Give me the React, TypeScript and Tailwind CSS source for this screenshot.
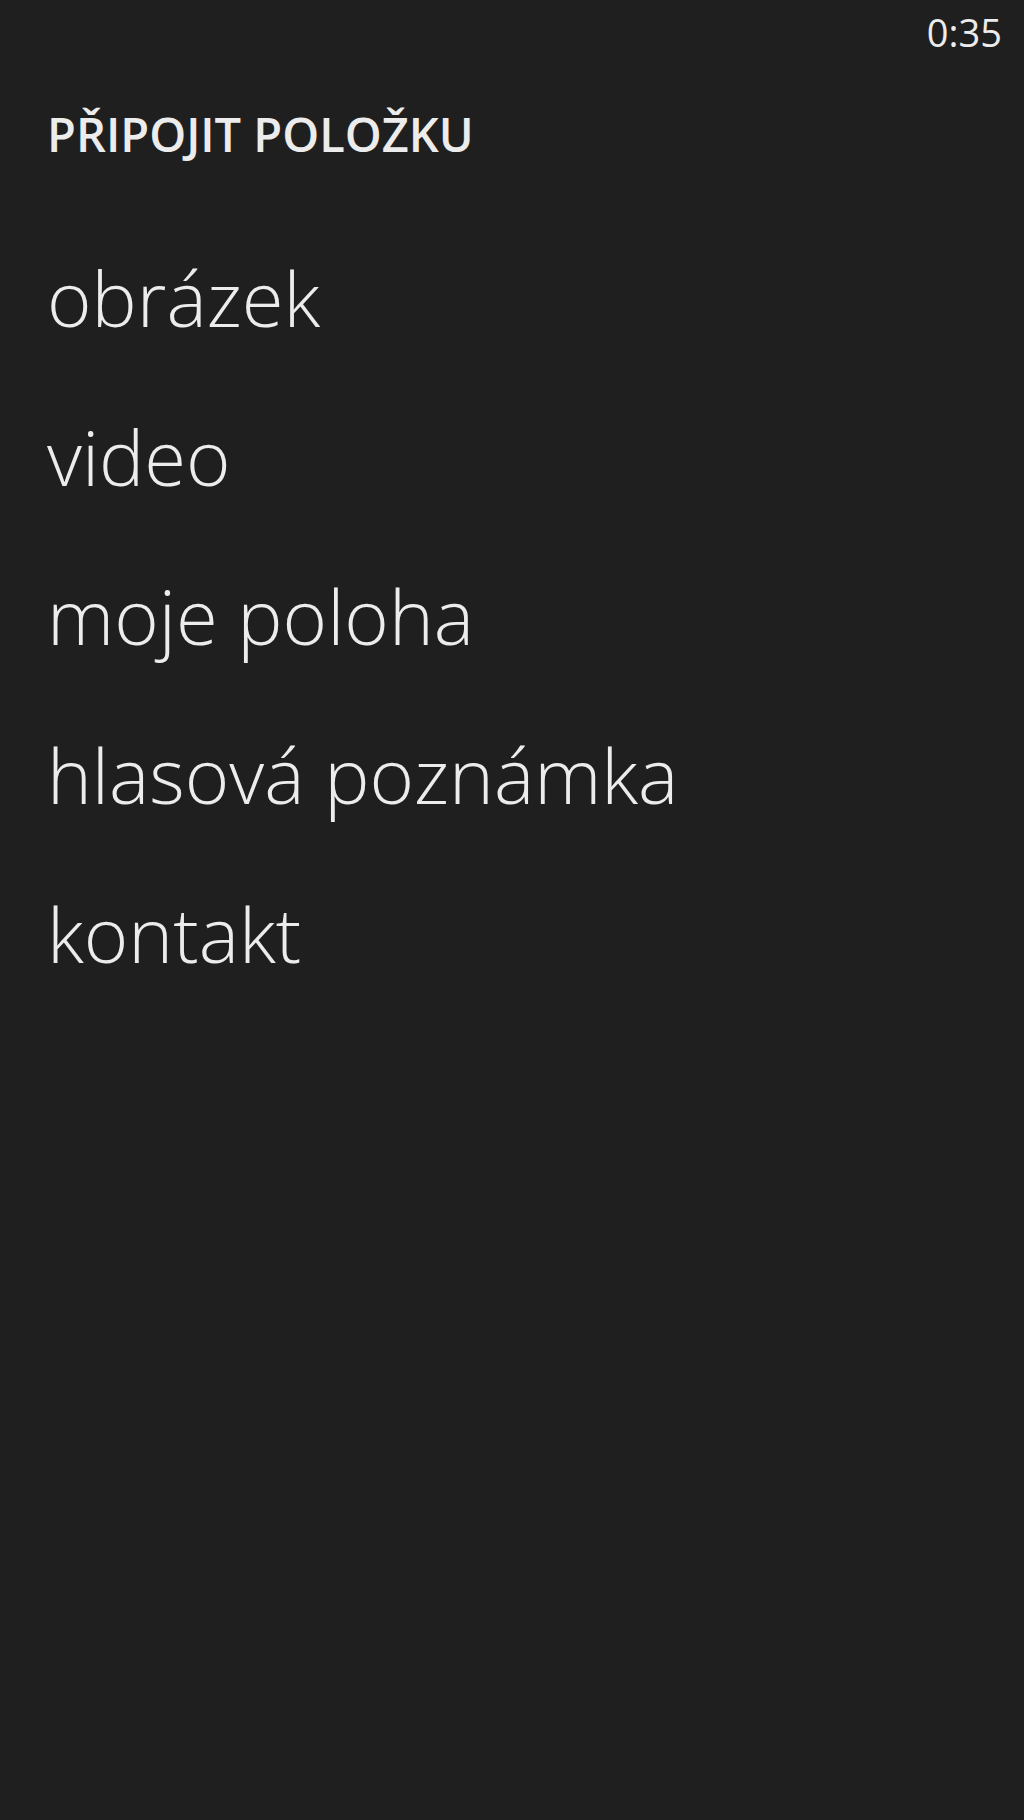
export default function App() {
  const items = ["obrázek", "video", "moje poloha", "hlasová poznámka", "kontakt"];

  return (
    <div className="flex min-h-[1820px] w-full flex-col bg-[#1f1f1f] text-[#ececec] [font-family:'Open_Sans',sans-serif]">
      <div className="flex justify-end pr-[22px] pt-[8px] text-[38px] leading-[48px] font-normal">0:35</div>
      <div className="pl-[47px] pt-[50px]">
        <h1 className="text-[47px] font-semibold leading-[56px]">PŘIPOJIT POLOŽKU</h1>
        <ul className="mt-[56px] flex flex-col">
          {items.map((item) => (
            <li key={item} className="text-[76px] font-light leading-[159px]">
              {item}
            </li>
          ))}
        </ul>
      </div>
    </div>
  );
}
